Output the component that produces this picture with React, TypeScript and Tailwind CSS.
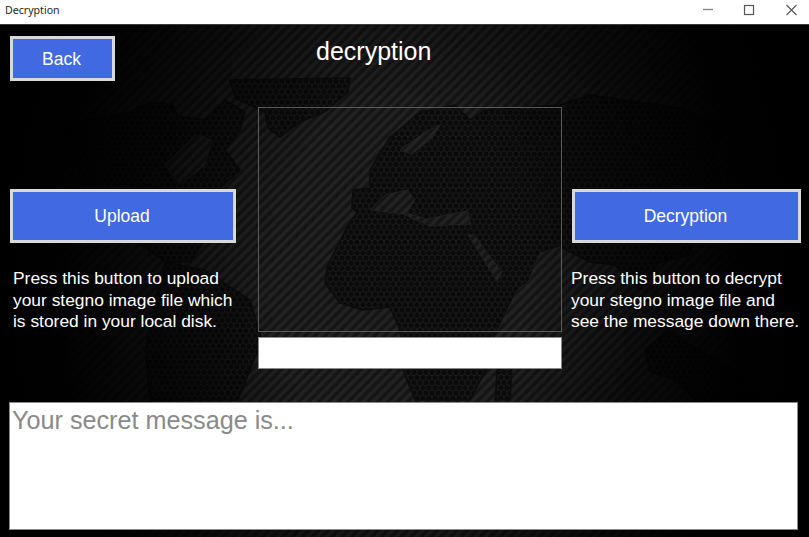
const font = { sans: "font-['Liberation_Sans',Arial,sans-serif]" };

function WorldMap() {
  return (
    <svg className="absolute inset-0 h-full w-full" viewBox="0 25 809 512" preserveAspectRatio="none">
      <defs>
        <pattern id="stripes" width="7" height="7" patternUnits="userSpaceOnUse" patternTransform="rotate(45)">
          <rect width="7" height="7" fill="#141414" />
          <rect width="3.5" height="7" fill="#222222" />
        </pattern>
        <pattern id="hex" width="6" height="10.39" patternUnits="userSpaceOnUse">
          <rect width="6" height="10.39" fill="#0a0a0a" />
          <path d="M3 0L6 1.73V5.2L3 6.93L0 5.2V1.73ZM3 6.93V10.39" fill="none" stroke="#1e1e1e" strokeWidth="0.9" />
        </pattern>
        <radialGradient id="fade" gradientUnits="userSpaceOnUse" cx="0" cy="0" r="420" gradientTransform="translate(400 280) scale(1 1.4)">
          <stop offset="0.3" stopColor="#000" stopOpacity="0" />
          <stop offset="0.6" stopColor="#000" stopOpacity="0.65" />
          <stop offset="0.82" stopColor="#000" stopOpacity="0.96" />
          <stop offset="1" stopColor="#000" stopOpacity="1" />
        </radialGradient>
      </defs>
      <rect x="0" y="25" width="809" height="512" fill="url(#stripes)" />
      <g fill="url(#hex)" stroke="#0c0c0c" strokeWidth="1.5" strokeLinejoin="round">
        {/* north america */}
        <path d="M60 125L130 112L150 102L172 104L178 116L205 120L225 100L245 112L240 130L225 150L240 170L218 190L235 205L232 225L205 240L190 262L165 262L120 230L85 190Z" />
        {/* south america */}
        <path d="M165 262L205 270L250 300L262 340L250 370L238 400L150 400L145 350L155 300Z" />
        {/* greenland */}
        <path d="M230 80L350 78L348 92L325 112L300 122L280 137L268 128L265 112L235 98Z" />
        {/* eurasia and africa */}
        <path d="M420 112L455 105L470 120L485 110L560 105L590 95L680 108L725 128L715 150L722 190L700 215L690 255L660 262L640 290L615 265L590 262L560 247L540 253L528 282L517 290L497 330L490 345L486 370L470 400L415 400L403 370L400 330L390 307L363 310L340 303L325 283L327 267L347 227L357 213L352 207L353 190L370 188L370 170L390 137L405 125Z" />
        {/* australia and islands */}
        <path d="M668 330L690 345L745 375L762 400L695 400L675 380L650 372L645 350Z" />
        <path d="M497 370L512 366L510 400L495 400Z" />
      </g>
      <g fill="url(#stripes)" stroke="#262626" strokeWidth="0.6" strokeLinejoin="round">
        {/* mediterranean */}
        <path d="M370 210L385 195L407 190L415 200L406 213L427 219L467 211L471 224L430 226L403 214Z" />
        {/* red sea */}
        <path d="M468 235L474 235L502 272L497 281Z" />
        {/* baltic */}
        <path d="M400 150L425 132L440 125L432 138L412 154Z" />
        {/* indian ocean wedge */}
        <path d="M560 247L562 332L497 332L517 290L528 282L540 253Z" />
        {/* hudson */}
        <path d="M165 165L195 135L212 140L205 165L180 185Z" />
        {/* gulf */}
        <path d="M720 140L760 130L765 190L725 190Z" />
      </g>
      <rect x="0" y="25" width="809" height="512" fill="url(#fade)" />
    </svg>
  );
}

function BlueButton({ label, className }: { label: string; className: string }) {
  return (
    <button className={`block border-[3px] border-[#d9d9d9] bg-[#4169e1] pt-px pr-[2px] text-[17.5px] text-white ${className}`}>
      {label}
    </button>
  );
}

function Hint({ lines }: { lines: string[] }) {
  return (
    <p className="text-[17.4px] leading-[21.5px] whitespace-nowrap text-white">
      {lines.map((line) => (
        <span key={line} className="block">
          {line}
        </span>
      ))}
    </p>
  );
}

export default function App() {
  return (
    <div className={`flex h-[537px] w-[809px] flex-col overflow-hidden bg-black ${font.sans}`}>
      {/* title bar */}
      <div className="flex h-[25px] shrink-0 items-center justify-between border-b border-[#3a3a3a] bg-white">
        <span className="pb-[3px] pl-[5px] font-['Noto_Sans',sans-serif] text-[10.6px] text-[#222222]">Decryption</span>
        <div className="flex items-center">
          <svg width="41" height="24" viewBox="0 0 41 24">
            <path d="M17 9.5H27" stroke="#8a8a8a" strokeWidth="1.4" />
          </svg>
          <svg width="42" height="24" viewBox="0 0 42 24">
            <rect x="17.5" y="5.5" width="9" height="9" fill="none" stroke="#555555" strokeWidth="1.2" />
          </svg>
          <svg width="40" height="24" viewBox="0 0 40 24">
            <path d="M17.5 5L27.5 15M27.5 5L17.5 15" stroke="#555555" strokeWidth="1.1" />
          </svg>
        </div>
      </div>

      <div className="relative flex-1">
        <WorldMap />
        <div className="relative flex flex-col">
          <div className="flex h-[377px]">
            {/* left column */}
            <div className="ml-[10px] w-[226px]">
              <BlueButton label="Back" className="mt-[11px] h-[45px] w-[105px]" />
              <BlueButton label="Upload" className="mt-[108px] h-[54px] w-[226px]" />
              <div className="mt-[25px] pl-[3px]">
                <Hint
                  lines={[
                    "Press this button to upload",
                    "your stegno image file which",
                    "is stored in your local disk.",
                  ]}
                />
              </div>
            </div>

            {/* center column */}
            <div className="ml-[22px] w-[304px]">
              <h1 className="mt-[11px] h-[30px] pl-[58px] text-[25px] leading-[30px] text-white">decryption</h1>
              <div className="mt-[41px] h-[225px] border border-[#5a5a5a]" />
              <div className="mt-[5px] h-[32px] border border-[#8a8a8a] bg-white" />
            </div>

            {/* right column */}
            <div className="ml-[10px] w-[229px]">
              <BlueButton label="Decryption" className="mt-[164px] h-[54px] w-[229px]" />
              <div className="mt-[25px] -ml-px">
                <Hint
                  lines={[
                    "Press this button to decrypt",
                    "your stegno image file and",
                    "see the message down there.",
                  ]}
                />
              </div>
            </div>
          </div>

          <div className="ml-[9px] h-[128px] w-[789px] border border-[#8a8a8a] bg-white px-[2px] text-[25.2px] leading-[34px] text-[#8a8a8a]">
            Your secret message is...
          </div>
        </div>
      </div>
    </div>
  );
}
